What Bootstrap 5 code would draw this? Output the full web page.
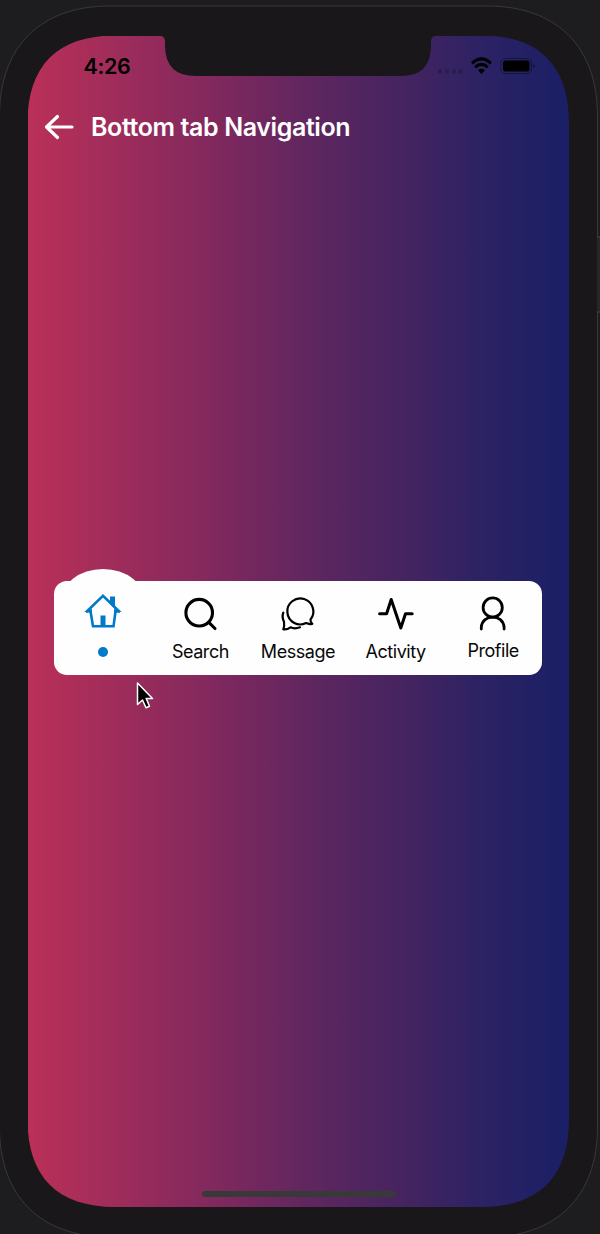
<!DOCTYPE html>
<html lang="en">
<head>
<meta charset="utf-8">
<meta name="viewport" content="width=device-width, initial-scale=1">
<title>Bottom tab Navigation</title>
<link rel="stylesheet" href="https://cdn.jsdelivr.net/npm/bootstrap@5.3.0/dist/css/bootstrap.min.css">
<style>
body{background:#1d1c1e;font-family:Inter,"Liberation Sans",sans-serif;width:600px;height:1234px}
.shell{inset:0;z-index:0}
.phone{height:1234px;padding:35.5px 31px 27px 27.5px}
.device-screen{height:1171.5px;z-index:1;background:linear-gradient(90deg,#ba3058 0%,#9c2c5b 18%,#7a285e 38%,#5c265f 54%,#442460 70%,#2c2264 84%,#1a1f66 100%);
clip-path:path("M0 88C0 30 30 0 88 0H131Q137.5 0 137.5 6V11Q138 40.5 168 40.5H374Q403 40.5 403.5 11V6Q403.5 0 410 0H453.5C511.5 0 541.5 30 541.5 88V1083.5C541.5 1141.5 511.5 1171.5 453.5 1171.5H88C30 1171.5 0 1141.5 0 1083.5Z")}
.status{height:61px;padding:0 33px 0 56px}
.clock{font-size:21.5px;font-weight:600;line-height:1;letter-spacing:-.35px;color:#000;padding-top:2px}
.app-head{height:60px;padding-left:16.5px;gap:17px}
.app-title{font-size:25px;font-weight:600;letter-spacing:-.4px;line-height:1;padding-top:1px}
.tabs{margin:424px 27px 0 26.5px;height:94px;background:#fffeff;border-radius:13px}
.tab-item{width:97.6px;padding-top:14px;font-size:18px;line-height:22px;letter-spacing:-.45px;color:#080808}
.tab-item svg{width:38px;height:38px;overflow:visible}
.tab-item span{margin-top:8px}
.tab-item .profile-label{margin-top:7px}
.bump{left:6px;top:-11.5px;width:86px;height:68px;border-radius:50%;background:#fffeff}
.tab-item .dot{width:10.5px;height:10.5px;margin-top:14px;border-radius:50%;background:#007ac8}
.pointer{left:107px;top:645px}
.home-bar{width:194px;height:6px;border-radius:3px;background:#393939;left:174px;bottom:10.5px}
</style>
</head>
<body class="m-0 overflow-hidden">
<div class="phone position-relative">
  <svg class="shell position-absolute" width="600" height="1234" viewBox="0 0 600 1234">
    <path d="M-.5 116C-.5 47 40 6 110 6H487C557 6 597.5 47 597.5 116V1127C597.5 1196 557 1237 487 1237H110C40 1237-.5 1196-.5 1127Z" fill="#19171a" stroke="#39383a"/>
    <path d="M597 237h3v75h-3z" fill="#272628"/><path d="M597 237h3M597 312h3" stroke="#454446"/>
  </svg>
  <main class="device-screen position-relative">
    <div class="status d-flex align-items-center justify-content-between">
      <div class="clock">4:26</div>
      <svg width="98" height="22" viewBox="0 0 98 22">
        <g fill="#000" opacity=".2"><rect x="0" y="14.500" width="4" height="4" rx="1"/><rect x="7" y="14.500" width="4" height="4" rx="1"/><rect x="14" y="14.500" width="4" height="4" rx="1"/><rect x="20.500" y="14.500" width="4" height="4" rx="1"/></g>
        <g fill="none" stroke="#000" stroke-width="3"><path d="M34 8.300Q43.500-.5 53 8.300"/><path d="M37.200 12.300Q43.500 6.500 49.800 12.300"/></g>
        <path d="M40 15.200Q43.500 12.500 47 15.200L43.500 19Z"/>
        <rect x="63" y="3.500" width="30.500" height="15" rx="4.500" fill="none" stroke="#000" stroke-opacity=".4"/><rect x="65" y="5.500" width="26.500" height="11" rx="2.500"/><path d="M95.500 8.500Q98.500 11 95.500 13.500Z" opacity=".45"/>
      </svg>
    </div>
    <header class="app-head d-flex align-items-center text-white">
      <svg width="30" height="26" viewBox="0 0 30 26" fill="none" stroke="#fff" stroke-width="3.200" stroke-linecap="round" stroke-linejoin="round"><path d="M28 13H2.500M13.500 2.500L2.500 13L13.500 23.500"/></svg>
      <h1 class="app-title m-0 text-nowrap">Bottom tab Navigation</h1>
    </header>
    <nav class="tabs d-flex position-relative">
      <div class="bump position-absolute"></div>
      <div class="tab-item d-flex flex-column align-items-center position-relative">
        <svg viewBox="0 0 38 38" fill="none" stroke="#007ac8" stroke-width="2.600"><path d="M2 17.300L19 .8L36 17.300M6.300 15L9 31.300H29.500L31.700 15"/><path d="M26 1.500H31V14L26 9Z" fill="#007ac8" stroke="none"/><path d="M0 16.600L8 14V18.500ZM38 16.600L30 14V18.500ZM16.500 20.500h5v11h-5z" fill="#007ac8" stroke="none"/></svg>
        <span class="dot"></span>
      </div>
      <div class="tab-item d-flex flex-column align-items-center">
        <svg viewBox="0 0 38 38" fill="none" stroke="#000" stroke-width="3.100" stroke-linecap="round"><circle cx="18.200" cy="17.700" r="13.300"/><path d="M27.800 27.300L34 33.500"/></svg>
        <span>Search</span>
      </div>
      <div class="tab-item d-flex flex-column align-items-center">
        <svg viewBox="0 0 38 38" fill="none" stroke="#000" stroke-width="2.200" stroke-linecap="round" stroke-linejoin="round"><path d="M31.500 24.500A13 13 0 1 0 27 28.100Q30 29.500 33.300 28.800Q31.200 27 31.500 24.500Z"/><path d="M4.300 17.700Q2.600 22 5 26.700Q5.600 31 4.300 34.300Q8 34.800 11.500 32.300Q15.500 34.300 21 32.300"/></svg>
        <span>Message</span>
      </div>
      <div class="tab-item d-flex flex-column align-items-center">
        <svg viewBox="0 0 38 38" fill="none" stroke="#000" stroke-width="3" stroke-linecap="round" stroke-linejoin="round"><path d="M2.600 18.800H9.600L14.200 4.500L23.800 33L28.500 18.800H35.200"/></svg>
        <span>Activity</span>
      </div>
      <div class="tab-item d-flex flex-column align-items-center">
        <svg viewBox="0 0 38 38" fill="none" stroke="#000" stroke-width="2.800" stroke-linecap="round"><circle cx="18.700" cy="12.500" r="9.600"/><path d="M7.300 34V32.500C8 18.600 29.400 18.600 30.100 32.500V34"/></svg>
        <span class="profile-label">Profile</span>
      </div>
    </nav>
    <svg class="pointer position-absolute" width="20" height="30" viewBox="0 0 20 30"><path d="M2.500 2V23.500L7.500 19L11 26.800L14.500 25.200L11.200 17.500H17.500Z" fill="#000" stroke="#fff" stroke-width="1.500" stroke-linejoin="round"/></svg>
    <div class="home-bar position-absolute"></div>
  </main>
</div>
<script src="https://cdn.jsdelivr.net/npm/bootstrap@5.3.0/dist/js/bootstrap.bundle.min.js"></script>
</body>
</html>
